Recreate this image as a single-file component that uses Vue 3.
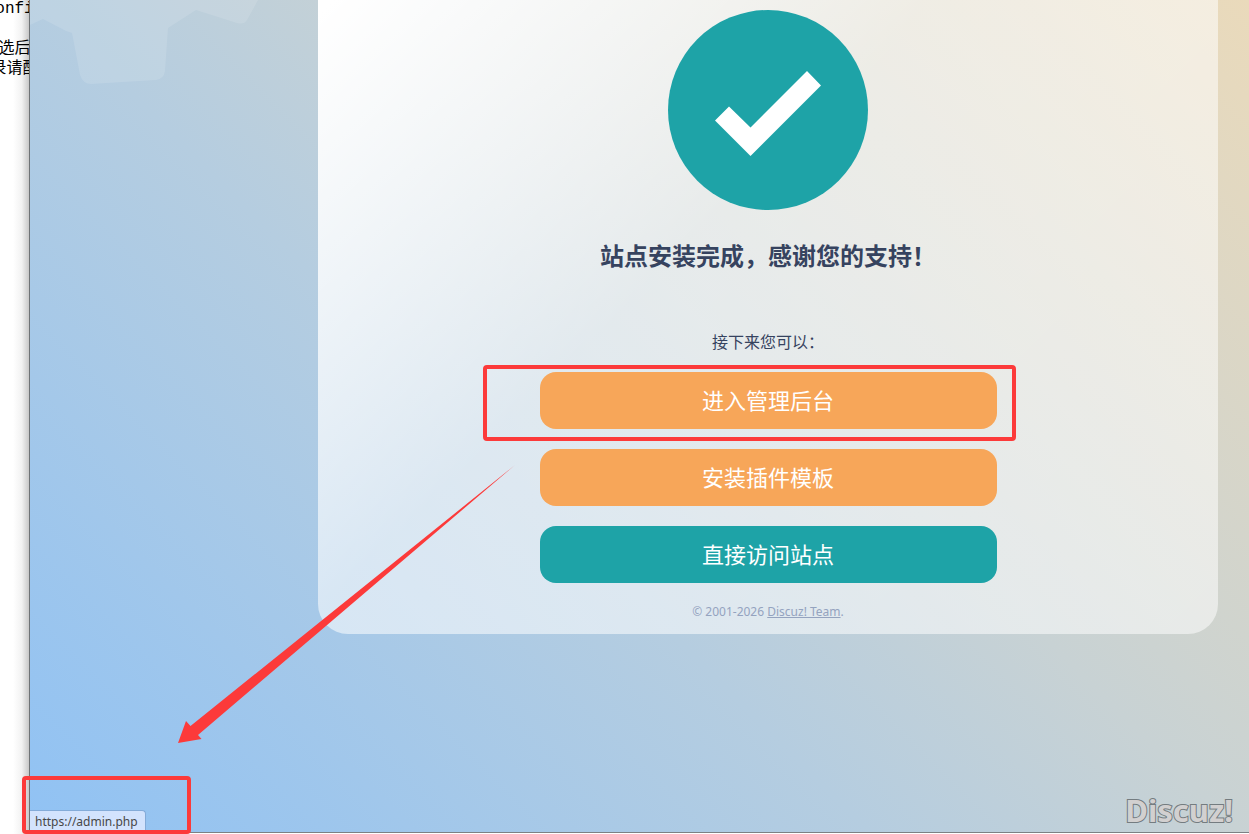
<script setup>
const notes = ['onfi', '', '选后', '录请配']
const actions = [
  { label: '进入管理后台', tone: 'orange', marked: true },
  { label: '安装插件模板', tone: 'orange', marked: false },
  { label: '直接访问站点', tone: 'teal', marked: false },
]
</script>

<template>
  <div class="screen">
    <aside class="backdrop">
      <p v-for="(line, i) in notes" :key="i" class="note">{{ line }}</p>
    </aside>

    <main class="window">
      <svg class="gear" width="232" height="90" viewBox="0 0 232 90" aria-hidden="true">
        <path d="M0 0H228L217 20Q214 25 207 23L166 10L138 28L135 71Q134 79 126 80L61 84Q53 84 50 75L42 33L36 31L13 19L0 25Z" />
      </svg>

      <section class="card">
        <svg class="check" width="200" height="200" viewBox="0 0 200 200" role="img" aria-label="完成">
          <circle cx="100" cy="100" r="100" fill="#1ea3a7" />
          <path d="M47 110.500L61 96.500L82.500 117.500L139 61L153 75.500L82.500 146Z" fill="#fff" />
        </svg>
        <h1 class="title">站点安装完成，感谢您的支持！</h1>
        <p class="lead">接下来您可以：</p>
        <div class="actions">
          <div v-for="a in actions" :key="a.label" class="action">
            <button type="button" class="btn" :class="a.tone">{{ a.label }}</button>
            <span v-if="a.marked" class="mark mark-action"></span>
          </div>
        </div>
        <footer class="copyright">© 2001-2026 <a href="#">Discuz! Team</a>.</footer>
      </section>

      <div class="bottom">
        <span class="status">https://admin.php</span>
        <span class="brand">Discuz!</span>
      </div>
    </main>

    <svg class="arrow" width="340" height="280" viewBox="0 0 340 280" aria-hidden="true">
      <path d="M338 1L21 271L24.500 275L1 279L9 257L13.500 262Z" fill="#fc3a3a" />
    </svg>
    <span class="mark mark-status"></span>
  </div>
</template>

<style>
body {
  margin: 0;
  background: #fff;
}
</style>

<style scoped>
.screen {
  position: relative;
  display: flex;
  height: 100vh;
  overflow: hidden;
  font-family: "Noto Sans", "Noto Sans CJK SC", sans-serif;
  color: #36435f;
}

.backdrop {
  flex: 0 0 29px;
  display: flex;
  flex-direction: column;
  align-items: center;
  overflow: hidden;
  background: linear-gradient(to right, #fff 45%, #f2f2f2 75%, #c8c8c8);
}

.note {
  flex: none;
  margin: 0;
  height: 20px;
  font: 16px/18px "Liberation Mono", "Noto Sans CJK SC", monospace;
  color: #000;
  white-space: nowrap;
}

.window {
  position: relative;
  flex: 1;
  display: flex;
  flex-direction: column;
  justify-content: space-between;
  min-width: 0;
  margin-bottom: 1px;
  border-left: 1px solid #6f7376;
  border-bottom: 1px solid #7c8184;
  background: linear-gradient(45deg, #90c2f4, #b5cde0 41%, #c8d2d4 59%, #eadabb);
}

.gear {
  position: absolute;
  top: 0;
  left: 0;
  fill: rgba(255, 255, 255, 0.12);
}

.card {
  position: relative;
  box-sizing: border-box;
  width: calc(100% - 62px);
  max-width: 900px;
  margin: 0 31px 0 auto;
  padding: 10px 24px 12px;
  display: flex;
  flex-direction: column;
  align-items: center;
  border-radius: 0 0 30px 30px;
  background: linear-gradient(135deg, #fff 1%, rgba(255, 255, 255, 0.55) 40%, rgba(255, 255, 255, 0.52));
}

.check {
  display: block;
}

.title {
  margin: 28px 0 0;
  font-size: 24px;
  line-height: 36px;
  font-weight: 700;
}

.lead {
  margin: 56px 0 18px;
  font-size: 16px;
  line-height: 24px;
}

.actions {
  display: flex;
  flex-direction: column;
  gap: 20px;
  width: 100%;
  max-width: 457px;
}

.action {
  position: relative;
}

.btn {
  display: block;
  width: 100%;
  height: 57px;
  padding: 0 0 4px;
  border: 0;
  border-radius: 16px;
  font: 22px/32px "Noto Sans CJK SC", sans-serif;
  color: #fff;
  cursor: pointer;
}

.orange {
  background: #f7a659;
}

.teal {
  background: #1ea3a7;
}

.copyright {
  margin-top: 18px;
  font-size: 12px;
  line-height: 21px;
  color: #94a3bf;
}

.copyright a {
  color: inherit;
}

.bottom {
  display: flex;
  justify-content: space-between;
  align-items: flex-end;
}

.status {
  box-sizing: border-box;
  height: 22px;
  padding: 0 7px 0 5px;
  border: 1px solid #84abd8;
  border-width: 1px 1px 0 0;
  border-radius: 0 4px 0 0;
  background: #d3e3fd;
  font-size: 12px;
  line-height: 22px;
  color: #474747;
}

.brand {
  margin-right: 16px;
  font-size: 31px;
  line-height: 44px;
  font-weight: 700;
  color: #d2d0d0;
  -webkit-text-stroke: 2px #747c80;
  paint-order: stroke fill;
}

.mark {
  position: absolute;
  box-sizing: border-box;
  border: 4px solid #fc3a3a;
  border-radius: 4px;
  pointer-events: none;
}

.mark-action {
  inset: -7px -19px -12px -57px;
}

.mark-status {
  left: 22px;
  bottom: 0;
  width: 169px;
  height: 58px;
}

.arrow {
  position: absolute;
  left: 177px;
  bottom: 90px;
  pointer-events: none;
}
</style>
